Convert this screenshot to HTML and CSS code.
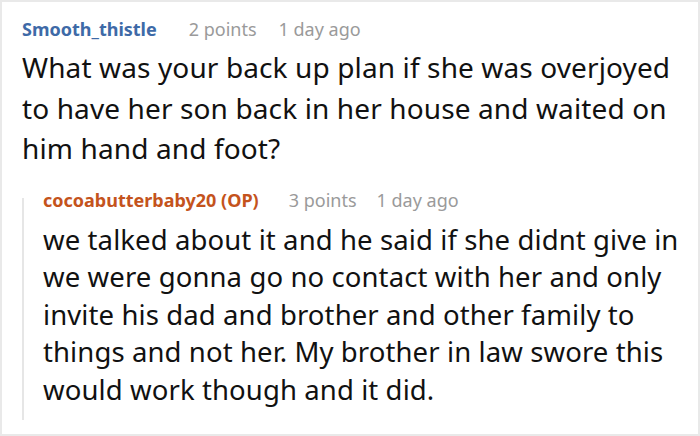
FILE: index.html
```html
<!DOCTYPE html>
<html>
<head>
<meta charset="utf-8">
<link rel="stylesheet" href="styles.css">
</head>
<body>
<div class="frame">
  <div class="comment">
    <div class="meta">
      <span class="author op-blue">Smooth_thistle</span>
      <span class="info points">2 points</span>
      <span class="info">1 day ago</span>
    </div>
    <p class="body body-main">What was your back up plan if she was overjoyed to have her son back in her house and waited on him hand and foot?</p>
    <div class="reply">
      <div class="thread"></div>
      <div class="reply-content">
        <div class="meta">
          <span class="author op-orange">cocoabutterbaby20 (OP)</span>
          <span class="info points points-reply">3 points</span>
          <span class="info">1 day ago</span>
        </div>
        <p class="body body-reply">we talked about it and he said if she didnt give in we were gonna go no contact with her and only invite his dad and brother and other family to things and not her. My brother in law swore this would work though and it did.</p>
      </div>
    </div>
  </div>
</div>
</body>
</html>
```

FILE: styles.css
```css
html, body {
  margin: 0;
  padding: 0;
  background: #ffffff;
}
.frame {
  width: 700px;
  height: 436px;
  box-sizing: border-box;
  border: 2px solid #e9e9e9;
  background: #ffffff;
  overflow: hidden;
  font-family: "Noto Sans", "Open Sans", sans-serif;
}
.comment {
  padding: 15px 0 0 20px;
}
.meta {
  display: flex;
  align-items: baseline;
  font-size: 18px;
  line-height: 24px;
  white-space: nowrap;
}
.author {
  font-weight: bold;
}
.points {
  margin-left: 32px;
  margin-right: 22px;
}
.points-reply {
  margin-left: 30px;
  margin-right: 20px;
}
.op-blue { color: #3e6aa7; }
.op-orange { color: #c4531c; }
.info { color: #9a9a9a; }
.body {
  margin: 0;
  color: #111111;
}
.body-main {
  margin-top: 6px;
  font-size: 28px;
  line-height: 40.5px;
  letter-spacing: 0.12px;
}
.reply {
  display: flex;
  margin-top: 19px;
}
.thread {
  flex: none;
  width: 2px;
  margin-top: 10px;
  background: #e6e6e6;
}
.reply-content {
  flex: 1;
  padding: 0 0 12px 19px;
}
.body-reply {
  margin-top: 9px;
  font-size: 27.5px;
  line-height: 37.5px;
  letter-spacing: 0.1px;
}
```
